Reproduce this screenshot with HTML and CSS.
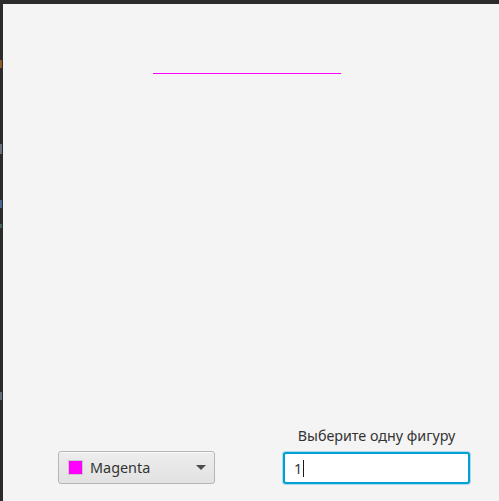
FILE: index.html
```html
<!DOCTYPE html>
<html>
<head>
<meta charset="utf-8">
<link rel="stylesheet" href="styles.css">
</head>
<body>
<div class="frame">
  <div class="edge-top"></div>
  <div class="main">
    <div class="edge-left">
      <span class="mark m1"></span>
      <span class="mark m2"></span>
      <span class="mark m3"></span>
      <span class="mark m4"></span>
      <span class="mark m5"></span>
    </div>
    <div class="window">
      <div class="canvas">
        <div class="shape-line"></div>
      </div>
      <div class="controls">
        <div class="combo">
          <span class="swatch"></span>
          <span class="combo-text">Magenta</span>
          <span class="arrow"></span>
        </div>
        <div class="field-group">
          <div class="label">Выберите одну фигуру</div>
          <div class="field"><span class="value">1</span><span class="caret"></span></div>
        </div>
      </div>
    </div>
  </div>
</div>
</body>
</html>
```
FILE: styles.css
```css
html, body {
  margin: 0;
  padding: 0;
  width: 499px;
  height: 501px;
  overflow: hidden;
  background: #f4f4f4;
}
.frame {
  display: flex;
  flex-direction: column;
  width: 499px;
  height: 501px;
}
.edge-top {
  height: 4px;
  background: #2b2b2b;
  flex: none;
}
.main {
  flex: 1;
  display: flex;
}
.edge-left {
  width: 3px;
  background: #2b2b2b;
  position: relative;
  flex: none;
}
.mark {
  position: absolute;
  left: 0;
  width: 2px;
}
.m1 { top: 56px; height: 8px; background: #8a5a2a; }
.m2 { top: 140px; height: 10px; background: #6a707a; }
.m3 { top: 196px; height: 8px; background: #4a6590; }
.m4 { top: 220px; height: 4px; background: #3f6a50; }
.m5 { top: 388px; height: 8px; background: #626b76; }
.window {
  flex: 1;
  display: flex;
  flex-direction: column;
  background: #f4f4f4;
  font-family: "Noto Sans", "Open Sans", sans-serif;
  color: #333333;
}
.canvas {
  flex: 1;
  position: relative;
}
.shape-line {
  position: absolute;
  left: 150px;
  top: 69px;
  width: 188px;
  height: 1px;
  background: #ff00ff;
}
.controls {
  height: 76px;
  display: flex;
  align-items: flex-end;
  padding: 0 0 17px 55px;
}
.combo {
  box-sizing: border-box;
  width: 157px;
  height: 33px;
  border: 1px solid #b5b5b5;
  border-radius: 3px;
  background: linear-gradient(#ededed, #e2e2e2);
  display: flex;
  align-items: center;
  padding: 0 0 0 9px;
  box-shadow: inset 0 1px 0 #fafafa;
}
.swatch {
  width: 13px;
  height: 13px;
  background: #ff00ff;
  border: 1px solid #c8c8c8;
  flex: none;
}
.combo-text {
  margin-left: 7px;
  font-size: 14.4px;
  color: #333;
  flex: 1;
}
.arrow {
  width: 0;
  height: 0;
  border-left: 5px solid transparent;
  border-right: 5px solid transparent;
  border-top: 5px solid #4d4d4d;
  margin-right: 8px;
}
.field-group {
  margin-left: 68px;
  display: flex;
  flex-direction: column;
  align-items: center;
}
.label {
  font-size: 14.3px;
  color: #333;
  margin-bottom: 7px;
}
.field {
  box-sizing: border-box;
  width: 187px;
  height: 32px;
  border: 2px solid #039ed3;
  border-radius: 3px;
  background: #ffffff;
  display: flex;
  align-items: center;
  padding-left: 9px;
  box-shadow: 0 0 0 1px #a8dcef;
}
.value {
  font-size: 14.4px;
  color: #333;
}
.caret {
  width: 1px;
  height: 17px;
  background: #1a1a1a;
  margin-left: 1px;
}
```
